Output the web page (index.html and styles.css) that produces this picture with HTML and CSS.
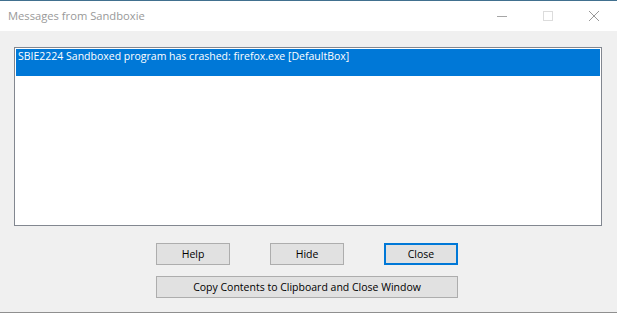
FILE: index.html
```html
<!DOCTYPE html>
<html lang="en">
<head>
    <meta charset="UTF-8">
    <meta name="viewport" content="width=device-width, initial-scale=1.0">
    <title>Messages from Sandboxie</title>
    <link rel="stylesheet" href="styles.css">
</head>
<body>

    <div class="window">
        <div class="titlebar">
            <span class="title">Messages from Sandboxie</span>
            <div class="controls">
                <span class="ctl">
                    <svg width="10" height="10" viewBox="0 0 10 10"><path d="M0 5.5h10" stroke="#a6a6a6" stroke-width="1"/></svg>
                </span>
                <span class="ctl">
                    <svg width="10" height="10" viewBox="0 0 10 10"><rect x="0.5" y="0.5" width="9" height="9" fill="none" stroke="#dcdcdc" stroke-width="1"/></svg>
                </span>
                <span class="ctl">
                    <svg width="10" height="10" viewBox="0 0 10 10"><path d="M0 0L10 10M10 0L0 10" stroke="#999" stroke-width="1"/></svg>
                </span>
            </div>
        </div>

        <div class="content">
            <div class="listbox">
                <div class="row selected">SBIE2224 Sandboxed program has crashed: firefox.exe [DefaultBox]</div>
            </div>

            <div class="actions">
                <div class="btn-row">
                    <button type="button">Help</button>
                    <button type="button">Hide</button>
                    <button type="button" class="default">Close</button>
                </div>
                <button type="button" class="wide">Copy Contents to Clipboard and Close Window</button>
            </div>
        </div>
    </div>

</body>
</html>
```

FILE: styles.css
```css
body {
    margin: 0;
    padding: 0;
    background-color: #fff;
    font-family: 'Open Sans', 'Noto Sans', sans-serif;
    font-size: 12px;
}

.window {
    width: 617px;
    height: 313px;
    display: flex;
    flex-direction: column;
    border-top: 1px solid #41708f;
    box-sizing: border-box;
}

.titlebar {
    height: 30px;
    display: flex;
    align-items: center;
    background-color: #fff;
}

.title {
    padding-left: 8px;
    color: #999;
    font-size: 11.2px;
    margin-top: -1px;
}

.controls {
    margin-left: auto;
    display: flex;
    height: 100%;
}

.ctl {
    width: 46px;
    display: flex;
    align-items: center;
    justify-content: center;
    margin-top: -1px;
}

.content {
    flex: 1;
    background-color: #f0f0f0;
    border-bottom: 1px solid #8f8f8f;
    padding: 16px 15px 0 14px;
}

.listbox {
    height: 179px;
    box-sizing: border-box;
    border: 1px solid #828790;
    background-color: #fff;
    padding: 1px;
}

.row {
    height: 27px;
    padding: 0 2px;
    line-height: 15px;
    font-size: 10.5px;
    color: #000;
}

.row.selected {
    background-color: #0078d7;
    color: #fff;
}

.actions {
    margin: 17px 0 0 142px;
    display: flex;
    flex-direction: column;
    gap: 11px;
    width: 302px;
}

.btn-row {
    display: flex;
    gap: 40px;
}

button {
    width: 74px;
    height: 22px;
    padding: 0;
    background-color: #e1e1e1;
    border: 1px solid #adadad;
    border-radius: 0;
    font-family: 'Open Sans', 'Noto Sans', sans-serif;
    font-size: 10.5px;
    color: #000;
    cursor: pointer;
}

button.default {
    border: 2px solid #0078d7;
}

button.wide {
    width: 302px;
}
```
